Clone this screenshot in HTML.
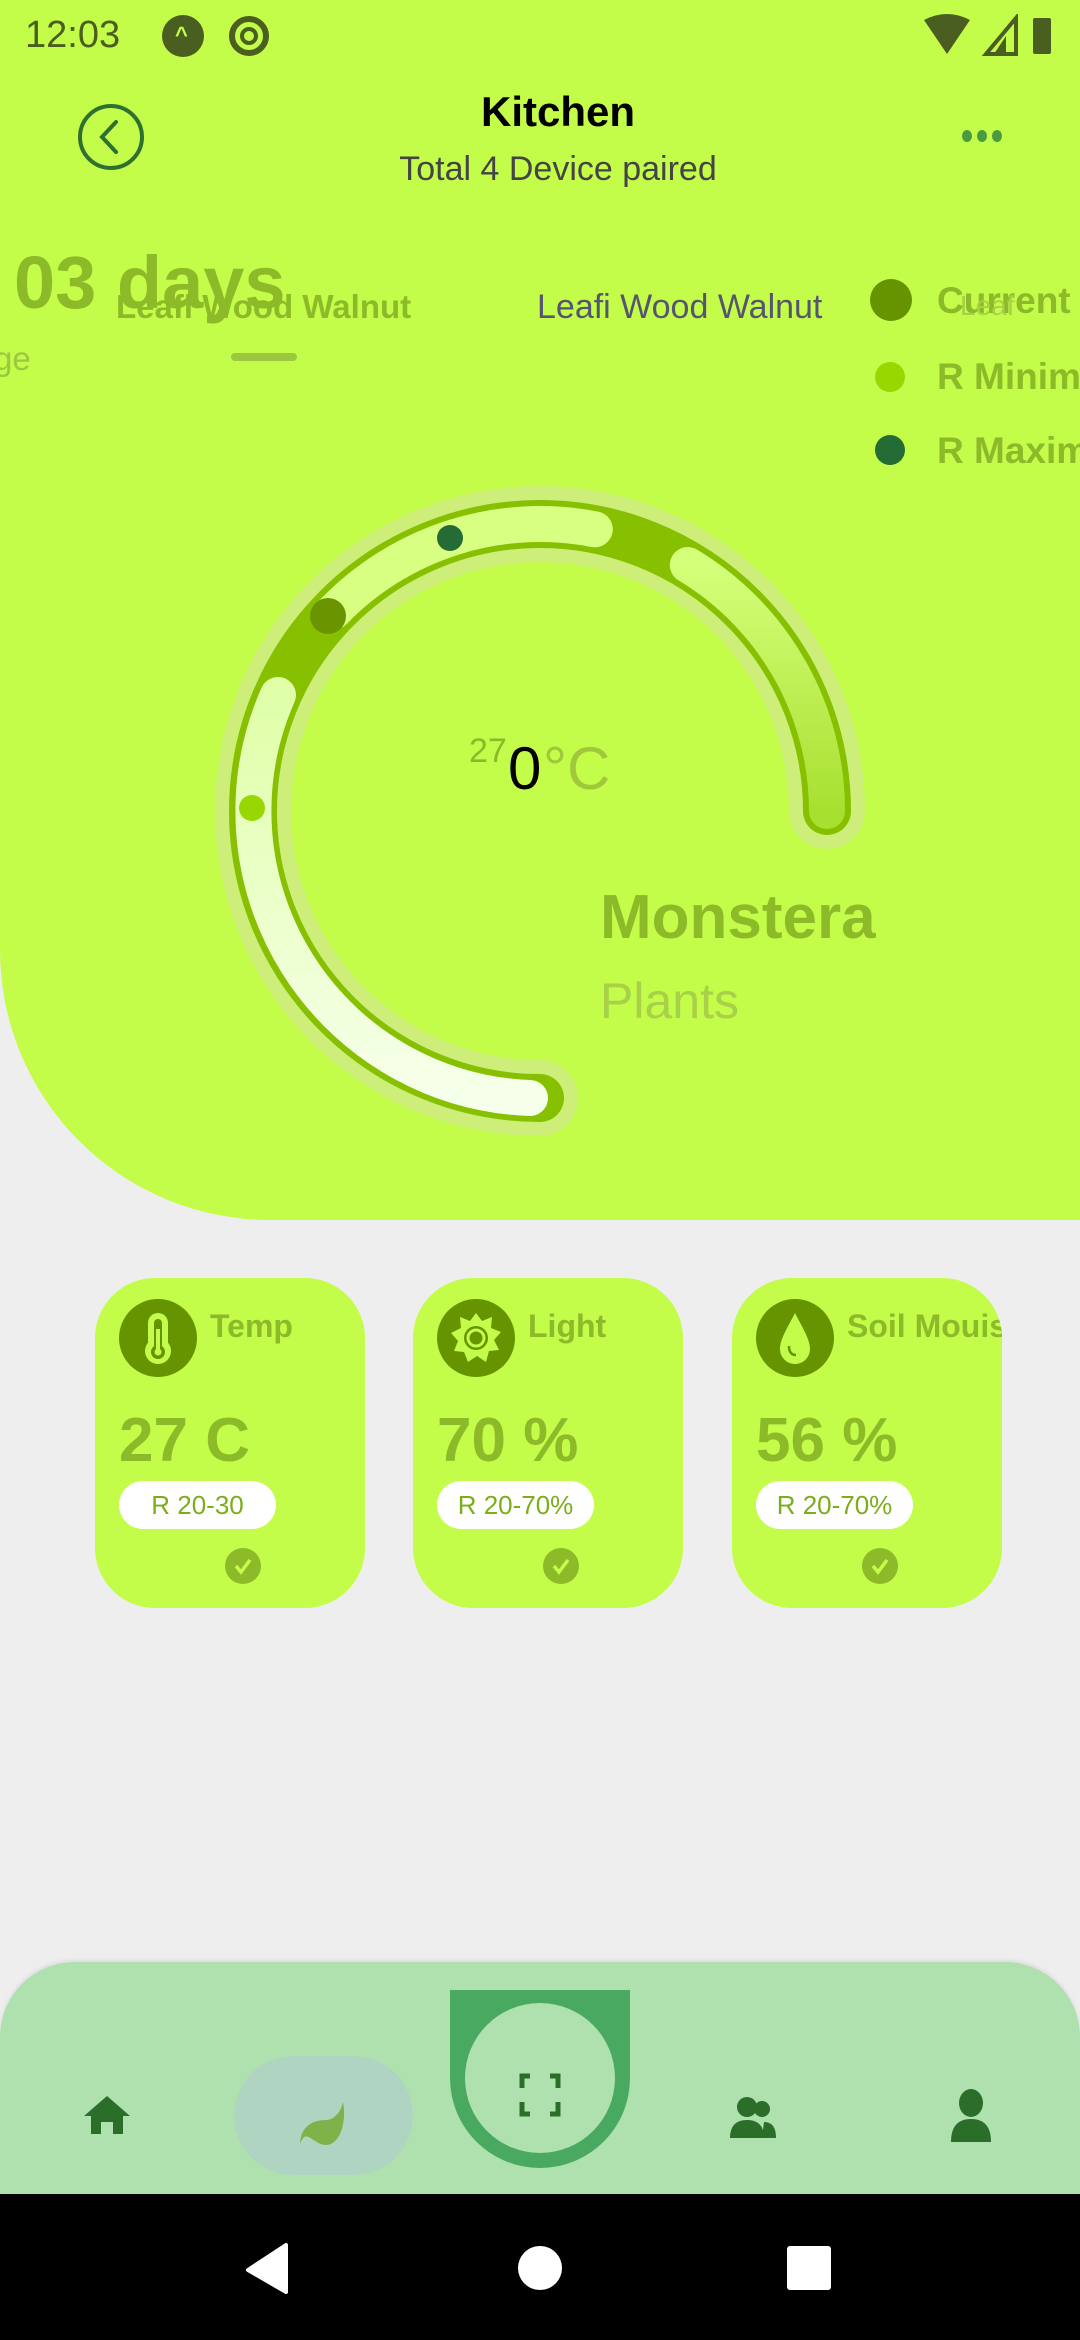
<!DOCTYPE html>
<html><head><meta charset="utf-8"><style>
*{margin:0;padding:0;box-sizing:border-box}
html,body{width:1080px;height:2340px;overflow:hidden}
body{background:#eeeeee;font-family:"Liberation Sans",sans-serif}
#w{position:relative;width:1080px;height:2340px;overflow:hidden}
.abs{position:absolute;white-space:nowrap}
.hdr{position:absolute;left:0;top:0;width:1080px;height:1220px;background:#c4fc4a;border-bottom-left-radius:270px}
.card{position:absolute;top:1278px;width:270px;height:330px;background:#c4fc4a;border-radius:60px;overflow:hidden}
.card .ic{position:absolute;left:24px;top:21px;width:78px;height:78px;border-radius:50%;background:#669400}
.card .t{position:absolute;left:115px;top:30px;font-size:32px;color:#8cba28;font-weight:bold;white-space:nowrap}
.card .v{position:absolute;left:24px;top:127px;font-size:62px;color:#8cba28;font-weight:bold}
.card .p{position:absolute;left:24px;top:203px;width:157px;height:48px;border-radius:24px;background:#fff;color:#7cad1a;font-size:26px;text-align:center;line-height:48px}
.card .ck{position:absolute;left:130px;top:270px;width:36px;height:36px;border-radius:50%;background:#8cba28}
.leg{position:absolute;left:937px;width:143px;overflow:hidden;white-space:nowrap;font-size:37px;font-weight:bold;color:#8cba28}
</style></head><body><div id="w">
<div class="hdr"></div>
<div class="abs" style="left:25px;top:14px;font-size:38px;color:#4a5e20">12:03</div>
<div class="abs" style="left:162px;top:15px;width:42px;height:42px;border-radius:50%;background:#4a5e20"></div>
<div class="abs" style="left:175px;top:22px;font-size:22px;color:#c4fc4a;font-weight:bold">^</div>
<div class="abs" style="left:229px;top:16px;width:40px;height:40px;border-radius:50%;border:6px solid #4a5e20"></div>
<div class="abs" style="left:240px;top:27px;width:18px;height:18px;border-radius:50%;border:4px solid #4a5e20"></div>
<svg class="abs" style="left:920px;top:14px" width="150" height="44" viewBox="0 0 150 44">
<path d="M4 6 Q27 -6 50 6 L27 40 Z" fill="#4a5e20"/>
<path d="M96 4 L96 40 L66 40 Z" fill="none" stroke="#4a5e20" stroke-width="4"/>
<path d="M86 22 L86 40 L74 40 Z" fill="#4a5e20"/>
<rect x="113" y="4" width="18" height="36" rx="2" fill="#4a5e20"/>
</svg>
<div class="abs" style="left:78px;top:104px;width:66px;height:66px;border-radius:50%;border:4px solid #2e7030"></div>
<svg class="abs" style="left:78px;top:104px" width="66" height="66"><path d="M38 18 L24 33 L38 48" fill="none" stroke="#2e7030" stroke-width="4" stroke-linecap="round"/></svg>
<div class="abs" style="left:0;width:1116px;text-align:center;top:88px;font-size:42px;font-weight:bold;color:#000">Kitchen</div>
<div class="abs" style="left:0;width:1116px;text-align:center;top:150px;font-size:34px;color:#444">Total 4 Device paired</div>
<div class="abs" style="left:962px;top:130px;width:10px;height:12px;border-radius:50%;background:#4a9a40"></div>
<div class="abs" style="left:977px;top:130px;width:10px;height:12px;border-radius:50%;background:#4a9a40"></div>
<div class="abs" style="left:992px;top:130px;width:10px;height:12px;border-radius:50%;background:#4a9a40"></div>
<div class="abs" style="left:14px;top:240px;font-size:74px;font-weight:bold;color:#8cba28">03 days</div>
<div class="abs" style="left:116px;top:288px;font-size:33px;font-weight:bold;color:#8cba28">Leafi Wood Walnut</div>
<div class="abs" style="left:-6px;top:340px;font-size:33px;color:#9cc840">ge</div>
<div class="abs" style="left:231px;top:353px;width:66px;height:8px;border-radius:4px;background:#9cc840"></div>
<div class="abs" style="left:537px;top:288px;font-size:34px;color:#555570">Leafi Wood Walnut</div>
<div class="abs" style="left:870px;top:279px;width:42px;height:42px;border-radius:50%;background:#669400"></div>
<div class="abs" style="left:875px;top:362px;width:30px;height:30px;border-radius:50%;background:#98d800"></div>
<div class="abs" style="left:875px;top:435px;width:30px;height:30px;border-radius:50%;background:#256b35"></div>
<div class="leg" style="top:280px">Current</div>
<div class="abs" style="left:960px;top:290px;font-size:28px;color:#a8d048">Leaf</div>
<div class="leg" style="top:356px">R Minimum</div>
<div class="leg" style="top:430px">R Maximum</div>
<svg class="abs" style="left:0;top:0" width="1080" height="1220">
<defs>
<linearGradient id="g1" x1="0" y1="1" x2="0" y2="0"><stop offset="0" stop-color="#f6ffea"/><stop offset="1" stop-color="#e0ffa8"/></linearGradient>
<linearGradient id="g3" x1="0" y1="0" x2="0" y2="1"><stop offset="0" stop-color="#d4ff7a"/><stop offset="1" stop-color="#a8e030"/></linearGradient>
</defs>
<path d="M540 1098 A287 287 0 1 1 827 811" fill="none" stroke="#cdee78" stroke-width="76" stroke-linecap="round"/>
<path d="M540 1098 A287 287 0 1 1 827 811" fill="none" stroke="#86c000" stroke-width="48" stroke-linecap="round"/>
<path d="M530 1098 A287 287 0 0 1 278 695" fill="none" stroke="url(#g1)" stroke-width="36" stroke-linecap="round"/>
<path d="M333.6 611.6 A287 287 0 0 1 594.8 529.3" fill="none" stroke="#d8ff82" stroke-width="36" stroke-linecap="round"/>
<path d="M687.8 565 A287 287 0 0 1 827 811" fill="none" stroke="url(#g3)" stroke-width="36" stroke-linecap="round"/>
<circle cx="450" cy="538" r="13" fill="#256b35"/>
<circle cx="328" cy="616" r="18" fill="#6a9400"/>
<circle cx="252" cy="808" r="13" fill="#98d800"/>
</svg>
<div class="abs" style="left:469px;top:732px;font-size:34px;color:#8cba28">27</div>
<div class="abs" style="left:508px;top:734px;font-size:60px;color:#000">0</div>
<div class="abs" style="left:543px;top:734px;font-size:60px;color:#a0c83c">°C</div>
<div class="abs" style="left:600px;top:882px;font-size:62px;font-weight:bold;color:#8cba28">Monstera</div>
<div class="abs" style="left:600px;top:972px;font-size:50px;color:#a8d048">Plants</div>
<div class="card" style="left:95px">
<div class="ic"><svg width="78" height="78"><rect x="29" y="14" width="20" height="38" rx="10" fill="#c4fc4a"/><circle cx="39" cy="52" r="13" fill="#c4fc4a"/><rect x="35" y="20" width="8" height="32" rx="4" fill="#669400"/><circle cx="39" cy="53" r="7" fill="#669400"/><rect x="37" y="30" width="4" height="24" fill="#c4fc4a"/><circle cx="39" cy="53" r="3.5" fill="#c4fc4a"/></svg></div>
<div class="t">Temp</div><div class="v">27 C</div><div class="p">R 20-30</div>
<div class="ck"><svg width="36" height="36"><path d="M11 18 L16 24 L25 12" fill="none" stroke="#c4fc4a" stroke-width="3.5"/></svg></div></div>
<div class="card" style="left:413px">
<div class="ic"><svg width="78" height="78"><polygon points="39,14 45,22 55,18 54,29 64,33 57,41 62,51 52,52 49,63 40,57 31,63 27,53 17,52 21,42 14,34 24,29 23,18 33,22" fill="#c4fc4a"/><circle cx="39" cy="39" r="12" fill="#669400"/><circle cx="39" cy="39" r="8" fill="none" stroke="#c4fc4a" stroke-width="3"/></svg></div>
<div class="t">Light</div><div class="v">70 %</div><div class="p">R 20-70%</div>
<div class="ck"><svg width="36" height="36"><path d="M11 18 L16 24 L25 12" fill="none" stroke="#c4fc4a" stroke-width="3.5"/></svg></div></div>
<div class="card" style="left:732px">
<div class="ic"><svg width="78" height="78"><path d="M39 14 C46 28 54 40 54 50 A15 15 0 0 1 24 50 C24 40 32 28 39 14 Z" fill="#c4fc4a"/><path d="M33 47 Q33 56 40 56" fill="none" stroke="#669400" stroke-width="2.5"/></svg></div>
<div class="t">Soil Mouisture</div><div class="v">56 %</div><div class="p">R 20-70%</div>
<div class="ck"><svg width="36" height="36"><path d="M11 18 L16 24 L25 12" fill="none" stroke="#c4fc4a" stroke-width="3.5"/></svg></div></div>
<div class="abs" style="left:0;top:1962px;width:1080px;height:232px;background:#aee1ae;border-radius:75px 75px 0 0;box-shadow:0 -2px 4px rgba(0,0,0,0.08)"></div>
<div class="abs" style="left:234px;top:2056px;width:179px;height:119px;border-radius:60px;background:#b0d4c2"></div>
<div class="abs" style="left:450px;top:1990px;width:180px;height:178px;background:#4aa960;border-radius:0 0 90px 90px"></div>
<div class="abs" style="left:465px;top:2003px;width:150px;height:150px;border-radius:50%;background:#aee1ae"></div>
<svg class="abs" style="left:0;top:1962px" width="1080" height="232">
<path d="M522 126 V114 H530 M550 114 H558 V126 M558 140 V152 H550 M530 152 H522 V140" fill="none" stroke="#2a6e2a" stroke-width="5"/>
<path d="M107 134 L84 154 H91 V172 H101 V160 H113 V172 H123 V154 H130 Z" fill="#2a6e2a"/>
<path d="M300 183 C300 165 312 158 326 158 C334 158 341 150 343 140 C347 160 340 183 326 183 C316 183 310 172 304 175 Q300 180 300 183 Z" fill="#7fb34a"/>
<circle cx="747" cy="145" r="10" fill="#2a6e2a"/><circle cx="762" cy="147" r="8" fill="#2a6e2a"/>
<path d="M730 176 Q730 158 747 158 Q764 158 764 176 Z" fill="#2a6e2a"/><path d="M762 176 Q776 176 776 176 Q776 160 764 160 Z" fill="#2a6e2a"/>
<ellipse cx="971" cy="141" rx="12" ry="14" fill="#2a6e2a"/><path d="M951 180 Q951 157 971 157 Q991 157 991 180 Z" fill="#2a6e2a"/>
</svg>
<div class="abs" style="left:0;top:2194px;width:1080px;height:146px;background:#000"></div>
<svg class="abs" style="left:0;top:2194px" width="1080" height="146">
<path d="M286 51 L286 98 L248 76 Z" fill="#fff" stroke="#fff" stroke-width="4" stroke-linejoin="round"/>
<circle cx="540" cy="74" r="22" fill="#fff"/>
<rect x="787" y="52" width="44" height="44" rx="3" fill="#fff"/>
</svg>
</div></body></html>
